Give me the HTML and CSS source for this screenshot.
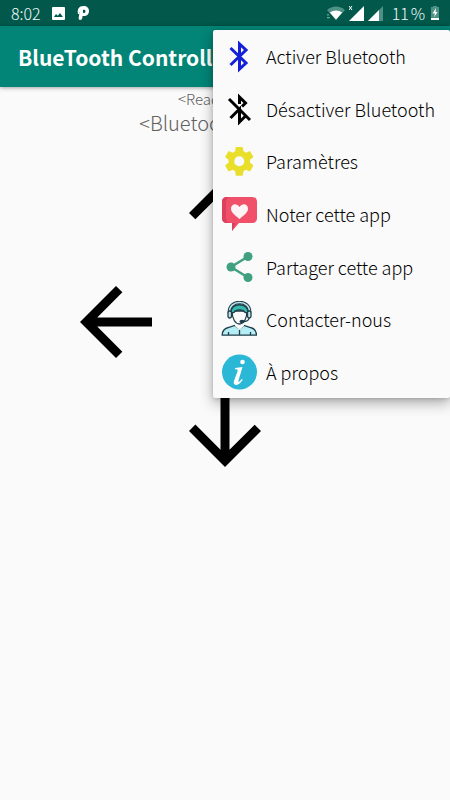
FILE: index.html
```html
<!DOCTYPE html>
<html lang="fr">
<head>
<meta charset="utf-8">
<meta name="viewport" content="width=device-width, initial-scale=1">
<title>BlueTooth Controller</title>
<link rel="stylesheet" href="styles.css">
</head>
<body>
<div class="status-bar">
  <span class="clock">8:02</span>
  <svg class="status-photo" viewBox="0 0 13 13" aria-hidden="true"><path fill="#fff" fill-rule="evenodd" d="M1 0h11a1 1 0 0 1 1 1v11a1 1 0 0 1-1 1H1a1 1 0 0 1-1-1V1a1 1 0 0 1 1-1zM2 10h9L8 6l-2.200 2.800L4 7z"/></svg>
  <svg class="status-p" viewBox="0 0 12 14" aria-hidden="true"><path fill="#fff" fill-rule="evenodd" d="M1 8C0 3 2 0 6.500 0 10 0 12 2 12 5s-2 5-5 5H5.500c0 3-1 4-2.500 4-1 0-1.500-1-1.300-2.500L2.700 5.500C3 7 2.500 8.500 1 8zM6 4v3c1.500 0 2.500-.5 2.500-1.800S7 3.500 6 4z"/></svg>
  <span class="signals">
    <svg class="wifi" viewBox="0 0 19 14" aria-hidden="true"><path fill="#4d9084" d="M0 4C5-1 14-1 19 4l-9.500 10z"/><path fill="#fff" d="M3 6.500c4-3 9-3 13 0L9.500 14z"/><path stroke="#9cc4bc" d="M0 9h2M0 12h3"/></svg>
    <svg class="cell" viewBox="0 0 15 15" aria-hidden="true"><path fill="#fff" d="M15 0v15H0z"/><path stroke="#fff" d="M0 0l3 4M3 0L0 4"/></svg>
    <svg class="cell" viewBox="0 0 15 15" aria-hidden="true"><path fill="#4d9084" d="M15 0v15H0z"/><path fill="#fff" d="M11 4v11H0z"/></svg>
    <span class="percent">11&#8239;%</span>
    <svg class="battery" viewBox="0 0 8 14" aria-hidden="true"><path fill="#4d9084" d="M2 0h4v1h2v11H0V1h2z"/><path fill="#fff" d="M0 12h8v2H0zM5 2L1.500 7.500H4L3 11.500 6.500 6H4.500z"/></svg>
  </span>
</div>
<header class="app-bar"><h1>BlueTooth Controller</h1></header>
<main>
  <p class="buffer">&lt;Read Buffer&gt;</p>
  <p class="state">&lt;Bluetooth Status&gt;</p>
  <div class="pad">
    <button class="up" type="button" aria-label="Avancer"><svg viewBox="0 0 24 24"><path d="M4 12l1.410 1.410L11 7.830V20h2V7.830l5.580 5.590L20 12l-8-8z"/></svg></button>
    <button class="left" type="button" aria-label="Gauche"><svg viewBox="0 0 24 24"><path d="M20 11H7.830l5.590-5.590L12 4l-8 8 8 8 1.410-1.410L7.830 13H20z"/></svg></button>
    <button class="right" type="button" aria-label="Droite"><svg viewBox="0 0 24 24"><path d="M12 4l-1.410 1.410L16.170 11H4v2h12.170l-5.580 5.590L12 20l8-8z"/></svg></button>
    <button class="down" type="button" aria-label="Reculer"><svg viewBox="0 0 24 24"><path d="M20 12l-1.410-1.410L13 16.170V4h-2v12.170l-5.580-5.590L4 12l8 8z"/></svg></button>
  </div>
</main>
<nav class="menu" aria-label="Options">
  <button type="button"><svg viewBox="0 0 36 36" aria-hidden="true"><path fill="none" stroke="#1420d8" stroke-width="3" d="M9.500 10L25 25l-6.500 6V6L25 12 9.500 27"/></svg><span>Activer Bluetooth</span></button>
  <button type="button"><svg viewBox="0 0 36 36" aria-hidden="true"><path fill="none" stroke="#000" stroke-width="3" d="M8 8l21 21M9.500 27l9-9V31l5.500-5.500M18.500 13V6l6 6-3.500 3.500"/></svg><span>Désactiver Bluetooth</span></button>
  <button type="button"><svg viewBox="0 0 36 36" aria-hidden="true"><path transform="translate(1 1) scale(1.440)" fill="#e9df2b" d="M19.430 12.980c.040-.320.070-.640.070-.980s-.030-.660-.070-.980l2.110-1.650c.190-.150.240-.420.120-.640l-2-3.460c-.120-.220-.390-.300-.610-.220l-2.490 1c-.520-.400-1.080-.730-1.690-.980l-.380-2.650C14.460 2.180 14.250 2 14 2h-4c-.250 0-.460.180-.490.420l-.380 2.650c-.610.250-1.170.590-1.690.980l-2.490-1c-.230-.090-.490 0-.610.220l-2 3.460c-.130.220-.070.490.120.640l2.110 1.650c-.040.320-.070.650-.070.980s.030.660.070.980l-2.110 1.650c-.190.150-.240.420-.120.640l2 3.460c.120.220.390.300.610.220l2.490-1c.520.400 1.080.730 1.690.980l.380 2.650c.030.240.240.420.490.420h4c.250 0 .460-.180.490-.420l.380-2.650c.610-.250 1.170-.590 1.690-.980l2.490 1c.230.090.490 0 .610-.220l2-3.460c.120-.220.070-.490-.120-.640zM12 15.500a3.500 3.500 0 1 1 0-7 3.500 3.500 0 0 1 0 7z"/></svg><span>Paramètres</span></button>
  <button type="button"><svg viewBox="0 0 36 36" aria-hidden="true"><path fill="#f0506a" d="M6 1h25q5 0 5 5v16q0 5-5 5H18l-7 8v-8H6q-5 0-5-5V6q0-5 5-5z"/><path fill="#dc405e" d="M6 1h4Q5 1 5 6v16q0 5 5 5h5l-4 8v-8H6q-5 0-5-5V6q0-5 5-5z"/><path fill="#fff4f5" d="M18.500 23c-6-5-8.500-7-8.500-10.500C10 8 15.500 6.500 18.500 11c3-4.500 8.500-3 8.500 1.500 0 3.500-2.500 5.500-8.500 10.500z"/></svg><span>Noter cette app</span></button>
  <button type="button"><svg viewBox="0 0 36 36" aria-hidden="true"><g fill="#40a080"><circle cx="10" cy="18" r="4.500"/><circle cx="27" cy="7.500" r="4.500"/><circle cx="27" cy="28.500" r="4.500"/></g><path fill="none" stroke="#40a080" stroke-width="2.500" d="M27 7.500L10 18l17 10.500"/></svg><span>Partager cette app</span></button>
  <button type="button"><svg viewBox="0 0 36 36" aria-hidden="true"><g stroke="#203f4b" stroke-width="1.300"><path fill="#b5edf5" d="M1.200 34.200c0-5 2-6.700 6-7.700l6.500-2 4.800 3.500 4.500-3.500 6.500 2c4 1 6 2.700 6 7.700z"/><path fill="#fafafa" stroke="none" d="M14 21v4l4.500 4 4.500-4v-4"/><path fill="#fafafa" d="M11 10c0 8 3.500 13 7.500 13s7.500-5 7.500-13z"/><path fill="#35b9ac" d="M10 12C9 1 28 1 27 12l-3-.5c-1-2-3-2.500-5.500-2.500S14 9.500 13 11.500z"/><path fill="none" stroke-width="3.500" d="M8.500 12C7-2 30-2 28.500 12"/><path fill="none" stroke="#bfe3e8" stroke-width="1.500" d="M8.500 12C7-2 30-2 28.500 12"/><rect x="7" y="10" width="3.500" height="7" rx="1.700" fill="#bfe3e8"/><rect x="26.500" y="10" width="3.500" height="7" rx="1.700" fill="#bfe3e8"/><path fill="none" d="M28 17c0 3-3 3.500-6 3.500M18.500 29v5M7.500 31v3M29.500 31v3"/></g><ellipse cx="21" cy="20.500" rx="2.500" ry="1.700" fill="#203f4b"/></svg><span>Contacter-nous</span></button>
  <button type="button"><svg viewBox="0 0 36 36" aria-hidden="true"><circle cx="18.500" cy="18" r="17.500" fill="#2bb8d6"/><ellipse cx="21.500" cy="8" rx="2.300" ry="2.200" fill="#fff"/><path fill="#fff" d="M14 14l7.500-1-4 13.500c-.5 2 .3 2 3.300-1.500l1 .8c-2.800 4-4.800 5.200-6.800 5.200-2.200 0-2.700-2-2-4.200L16.500 17.500c.5-1.800 0-2.300-2.500-2.300z"/></svg><span>À propos</span></button>
</nav>
</body>
</html>
```
FILE: styles.css
```css
* { box-sizing: border-box; }
body {
  margin: 0;
  min-height: 100vh;
  background: #fafafa;
  color: #111;
  font-family: "Noto Sans CJK SC", "Open Sans", sans-serif;
  overflow-x: hidden;
}
button {
  border: 0;
  padding: 0;
  background: none;
  color: inherit;
  font: inherit;
  text-align: left;
}
svg { display: block; flex: none; }
.status-bar {
  display: flex;
  align-items: center;
  height: 26px;
  padding: 0 11px;
  background: #01584b;
  color: #f2faf8;
  font-size: 16px;
  font-weight: 300;
  line-height: 26px;
}
.status-photo { width: 13px; height: 13px; margin-left: 11px; }
.status-p { width: 12px; height: 14px; margin-left: 12px; }
.signals { display: flex; align-items: center; gap: 4px; margin-left: auto; }
.wifi { width: 18px; height: 14px; }
.cell { width: 15px; height: 15px; }
.percent { margin: 0 2px 0 5px; }
.battery { width: 8px; height: 14px; }
.app-bar {
  display: flex;
  align-items: center;
  height: 61px;
  padding: 0 18px;
  background: #028576;
  box-shadow: 0 1px 4px rgba(0, 0, 0, .35);
}
h1 {
  margin: 0;
  color: #fff;
  font-size: 21px;
  font-weight: 700;
  line-height: 32px;
  white-space: nowrap;
}
main {
  display: flex;
  flex-direction: column;
  align-items: center;
  color: #606060;
  font-weight: 300;
}
main p { margin: 0; }
.buffer { font-size: 15px; line-height: 24px; }
.state { font-size: 20px; line-height: 24px; }
.pad {
  display: grid;
  grid-template: repeat(3, 109px) / repeat(3, 109px);
  grid-template-areas: ". up ." "left . right" ". down .";
  place-items: center;
  margin-top: 23px;
  color: #000;
}
.pad svg { width: 108px; height: 108px; fill: currentColor; }
.up { grid-area: up; }
.left { grid-area: left; }
.right { grid-area: right; }
.down { grid-area: down; }
.menu {
  position: absolute;
  top: 30px;
  right: 0;
  display: grid;
  grid-auto-rows: 1fr;
  width: 237px;
  height: 368px;
  border-radius: 2px;
  background: #fafafa;
  box-shadow: 0 5px 14px rgba(0, 0, 0, .32), 0 1px 4px rgba(0, 0, 0, .15);
}
.menu button {
  display: flex;
  align-items: center;
  gap: 9px;
  padding: 0 8px;
  color: #000;
  font-size: 18px;
  font-weight: 300;
  white-space: nowrap;
}
.menu svg { width: 36px; height: 36px; }
```
